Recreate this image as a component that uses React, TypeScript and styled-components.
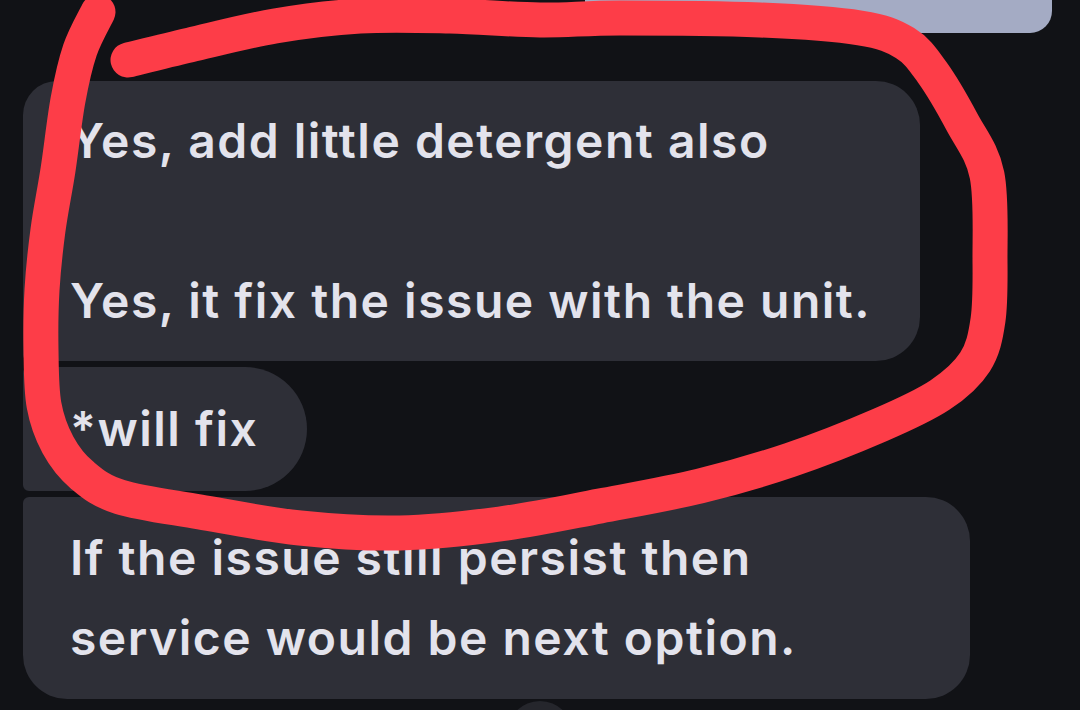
import React from 'react';
import styled, { createGlobalStyle } from 'styled-components';

const GlobalStyle = createGlobalStyle`
  html, body {
    margin: 0;
    padding: 0;
    background: #111216;
    overflow: hidden;
  }
`;

const Screen = styled.div`
  position: relative;
  width: 1080px;
  height: 710px;
  overflow: hidden;
  background: #111216;
  font-family: 'Inter', 'Noto Sans', sans-serif;
`;

const Thread = styled.div`
  display: flex;
  flex-direction: column;
  margin-top: -57px;
`;

const OutgoingRow = styled.div`
  display: flex;
  justify-content: flex-end;
  padding-right: 28px;
`;

const OutgoingBubble = styled.div`
  width: 467px;
  height: 90px;
  background: #a4abc4;
  border-radius: 22px;
`;

const Group = styled.div`
  display: flex;
  flex-direction: column;
  align-items: flex-start;
  gap: 6px;
  margin-top: 48px;
  padding-left: 23px;
`;

type Corners = { tl: number; tr: number; br: number; bl: number };

const Bubble = styled.div<{ $r: Corners; $padY: number; $wide?: boolean }>`
  box-sizing: border-box;
  max-width: 947px;
  width: ${({ $wide }) => ($wide ? '947px' : 'fit-content')};
  padding: ${({ $padY }) => `${$padY}px 49px ${$padY}px 47px`};
  background: #2e2f37;
  color: #e3e3ec;
  font-size: 48px;
  font-weight: 600;
  letter-spacing: 1.5px;
  line-height: 80px;
  white-space: pre-wrap;
  border-radius: ${({ $r }) => `${$r.tl}px ${$r.tr}px ${$r.br}px ${$r.bl}px`};
`;

const FabRow = styled.div`
  display: flex;
  justify-content: center;
  margin-top: 2px;
`;

const Fab = styled.div`
  width: 66px;
  height: 66px;
  border-radius: 50%;
  background: #25262c;
`;

const Scribble = styled.svg`
  position: absolute;
  inset: 0;
  pointer-events: none;
`;

const strokePoints: [number, number][] = [
  [98, 12], [80, 50], [68, 100], [58, 170], [48, 230], [42, 290], [41, 350],
  [44, 405], [58, 445], [82, 475], [120, 497], [200, 512], [300, 528],
  [400, 533], [500, 524], [600, 506], [700, 486], [790, 460], [880, 425],
  [940, 395], [975, 362], [988, 320], [990, 260], [987, 175], [962, 122],
  [932, 72], [905, 43], [860, 28], [760, 20], [620, 18], [540, 20],
  [450, 16], [360, 16], [275, 26], [190, 45], [128, 60],
];

// Catmull-Rom through the traced points, as cubic segments
const smoothPath = (pts: [number, number][]) => {
  let d = `M ${pts[0][0]} ${pts[0][1]}`;
  for (let i = 0; i < pts.length - 1; i++) {
    const p0 = pts[i - 1] || pts[i];
    const p1 = pts[i];
    const p2 = pts[i + 1];
    const p3 = pts[i + 2] || p2;
    const c1x = p1[0] + (p2[0] - p0[0]) / 6;
    const c1y = p1[1] + (p2[1] - p0[1]) / 6;
    const c2x = p2[0] - (p3[0] - p1[0]) / 6;
    const c2y = p2[1] - (p3[1] - p1[1]) / 6;
    d += ` C ${c1x} ${c1y} ${c2x} ${c2y} ${p2[0]} ${p2[1]}`;
  }
  return d;
};

const App = () => {
  return (
    <>
      <GlobalStyle />
      <Screen>
        <Thread>
          <OutgoingRow>
            <OutgoingBubble />
          </OutgoingRow>
          <Group>
            <Bubble $padY={20} $r={{ tl: 34, tr: 44, br: 44, bl: 6 }}>
              {'Yes, add little detergent also\n\nYes, it fix the issue with the unit.'}
            </Bubble>
            <Bubble $padY={22} $r={{ tl: 6, tr: 62, br: 62, bl: 6 }}>
              *will fix
            </Bubble>
            <Bubble $wide $padY={21} $r={{ tl: 6, tr: 44, br: 44, bl: 44 }}>
              If the issue still persist then service would be next option.
            </Bubble>
          </Group>
          <FabRow>
            <Fab />
          </FabRow>
        </Thread>
        <Scribble width="1080" height="710" viewBox="0 0 1080 710">
          <path
            d={smoothPath(strokePoints)}
            fill="none"
            stroke="#fd3d48"
            strokeWidth={35}
            strokeLinecap="round"
            strokeLinejoin="round"
          />
        </Scribble>
      </Screen>
    </>
  );
};

export default App;
